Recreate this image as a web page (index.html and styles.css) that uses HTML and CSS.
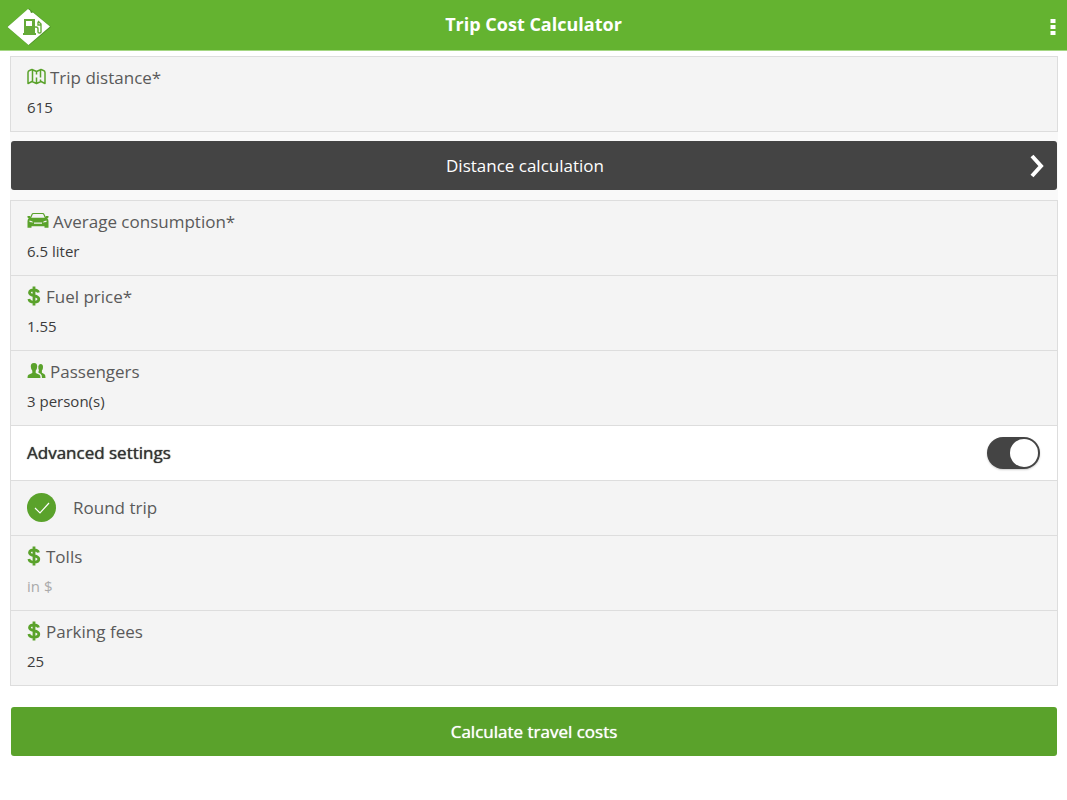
FILE: index.html
```html
<!DOCTYPE html>
<html lang="en">
<head>
<meta charset="utf-8">
<meta name="viewport" content="width=device-width, initial-scale=1">
<title>Trip Cost Calculator</title>
<link rel="stylesheet" href="styles.css">
</head>
<body>
<svg class="symbols" aria-hidden="true">
  <symbol id="dollar" viewBox="0 0 14 20">
    <path d="M7 0.500v19M11.500 6.500C11 4.500 9.500 3.800 7 3.800C4.500 3.800 2.500 4.800 2.500 6.700C2.500 10.500 11.800 8.600 11.800 13C11.800 15.200 9.500 16.200 7 16.200C4.300 16.200 2.300 15.200 1.900 13" fill="none" stroke="currentColor" stroke-width="2.800"/>
  </symbol>
</svg>
<header class="topbar">
  <svg class="logo" viewBox="0 0 46 40" role="img" aria-label="Fuel pump logo">
    <path d="M23 1.500L45 20L23 38.500L1 20Z" fill="#4f9428"/>
    <path d="M22 2L24 3.500L25 6L27 5.500L44 19.500L22.500 38L1.500 20Z" fill="#fff"/>
    <path d="M18 12h11v14h1v2H17v-2h1z" fill="#65aa38"/>
    <path d="M20 14h6v5h-6z" fill="#fff"/>
    <path d="M29 20h1q2 0 2 2v3q0 1 1.500 1t1.500-1v-8l-3-3M32 15v3h3" fill="none" stroke="#65aa38" stroke-width="1.400"/>
  </svg>
  <h1 class="title">Trip Cost Calculator</h1>
  <button class="menu" type="button" aria-label="Menu">
    <svg class="dots" viewBox="0 0 6 18"><path d="M.5 1h5v4h-5zM.5 7h5v4h-5zM.5 13h5v4h-5z" fill="#fff"/></svg>
  </button>
</header>
<main>
<form class="page">
  <div class="panel">
    <div class="group">
      <div class="row">
        <label class="label" for="distance">
          <svg class="icon map" viewBox="0 0 19 17"><path d="M1 4.500Q1 3 2.500 2.500L5 1.500L9.500 3.500L14 1.500L16.500 2.500Q18 3 18 4.500V15.500L14 13.500L9.500 15.500L5 13.500L1 15.500ZM5.500 1.500v12M9.500 3.500v3M9.500 9.500v6M13.500 1.500v8M13.500 11.500v2" fill="none" stroke="currentColor" stroke-width="1.500" stroke-linejoin="round"/></svg>
          Trip distance*</label>
        <input class="value" id="distance" type="text" value="615">
      </div>
    </div>
    <button class="button dark" type="button">
      <span class="caption">Distance calculation</span>
      <svg class="chevron" viewBox="0 0 14 24"><path d="M2 2L11 12L2 22" fill="none" stroke="#fff" stroke-width="4"/></svg>
    </button>
    <div class="group">
      <div class="row">
        <label class="label" for="consumption">
          <svg class="icon car" viewBox="0 0 22 17"><path d="M3.500 6L5 2.500Q5.300 1.500 6.500 1.500h9Q16.700 1.500 17 2.500L18.500 6" fill="none" stroke="currentColor" stroke-width="1.200"/><path fill-rule="evenodd" d="M0.500 4h2.500l1 1.800h14l1-1.800h2.500v1.500l-1.200.800q1.200 1.200 1.200 3v6.500H17.500v-1.500H4.500v1.500H.500v-6.500q0-1.800 1.200-3L.500 5.500ZM2.500 8.500v1.500l4 .500q-1-1.700-4-2ZM19.500 8.500v1.500l-4 .500q1-1.700 4-2ZM7 10.500h8v1.200h-8Z" fill="currentColor"/></svg>
          Average consumption*</label>
        <input class="value" id="consumption" type="text" value="6.5 liter">
      </div>
      <div class="row">
        <label class="label" for="price"><svg class="icon dollar"><use href="#dollar"/></svg>Fuel price*</label>
        <input class="value" id="price" type="text" value="1.55">
      </div>
      <div class="row">
        <label class="label" for="passengers">
          <svg class="icon people" viewBox="0 0 19 17"><path d="M7 1C9.500 1 10.300 2.500 10.200 4.700Q10 7.500 8.700 8.800V11L12.500 12.700Q13.500 13.300 13.500 16H0.500Q.500 13.300 1.500 12.700L5.300 11V8.800Q4 7.500 3.800 4.700C3.700 2.500 4.500 1 7 1ZM13.500 2C15.500 2 16.200 3.300 16 5.200Q16 7.400 14.900 8.600V10.800L17.500 12.300Q18.500 13 18.500 16H15Q15 12.500 13.500 11.800L11.500 10.700V9.500Q12.200 8.500 11.800 7.700Q11.200 6.800 11.300 4.500Q11.600 2 13.500 2Z" fill="currentColor"/></svg>
          Passengers</label>
        <input class="value" id="passengers" type="text" value="3 person(s)">
      </div>
      <div class="row line white">
        <label class="strong" for="advanced">Advanced settings</label>
        <input class="switch" id="advanced" type="checkbox" role="switch" checked>
      </div>
      <div class="row line">
        <label class="check-label" for="round">
          <span class="tick">
            <input class="round" id="round" type="checkbox" checked>
            <svg class="mark" viewBox="0 0 18 14"><path d="M2 7L7 12L16 2" fill="none" stroke="#fff" stroke-width="1.200"/></svg>
          </span>
          Round trip</label>
      </div>
      <div class="row">
        <label class="label" for="tolls"><svg class="icon dollar"><use href="#dollar"/></svg>Tolls</label>
        <input class="value" id="tolls" type="text" placeholder="in $">
      </div>
      <div class="row">
        <label class="label" for="parking"><svg class="icon dollar"><use href="#dollar"/></svg>Parking fees</label>
        <input class="value" id="parking" type="text" value="25">
      </div>
    </div>
  </div>
  <button class="button green" type="button">Calculate travel costs</button>
</form>
</main>
</body>
</html>
```

FILE: styles.css
```css
* {
  box-sizing: border-box;
}

body {
  margin: 0;
  background: #fff;
  color: #5a5a5a;
  font-family: "Open Sans", "Noto Sans", sans-serif;
  font-size: 17px;
}

.symbols {
  display: none;
}

.topbar {
  display: grid;
  grid-template-columns: 46px 1fr 46px;
  align-items: center;
  height: 51px;
  padding: 0 6px;
  background: #64b330;
  border-bottom: 1px solid #a5d784;
}

.logo {
  width: 46px;
  height: 40px;
  margin-top: 4px;
}

.title {
  margin: 0;
  padding-bottom: 3px;
  color: #fff;
  font-size: 18px;
  font-weight: 700;
  line-height: 24px;
  text-align: center;
}

.menu {
  display: flex;
  justify-content: flex-end;
  padding: 4px 5px 0 0;
  border: 0;
  background: none;
}

.dots {
  width: 6px;
  height: 18px;
}

.page {
  padding: 5px 9px 16px 10px;
}

.panel {
  background: #f9f9f9;
}

.group {
  border: 1px solid #ddd;
  background: #f4f4f4;
}

.row {
  padding: 8px 16px 14px;
}

.row + .row {
  border-top: 1px solid #ddd;
}

.row.line {
  display: flex;
  align-items: center;
  justify-content: space-between;
  height: 55px;
  padding: 0 17px 1px 16px;
}

.row.white {
  background: #fff;
}

.label {
  display: flex;
  align-items: center;
  gap: 4px;
  height: 26px;
  line-height: 26px;
}

.icon {
  flex: none;
  height: 17px;
  margin-bottom: 3px;
  color: #5aa22b;
}

.map,
.people {
  width: 19px;
}

.car {
  width: 22px;
}

.dollar {
  width: 14px;
  height: 20px;
  margin-right: 1px;
}

.value {
  display: block;
  width: 100%;
  height: 20px;
  margin: 6px 0 0;
  padding: 0;
  border: 0;
  background: none;
  color: #3c3c3c;
  font-family: inherit;
  font-size: 15px;
  line-height: 20px;
}

.value::placeholder {
  color: #aaa;
  opacity: 1;
}

.strong {
  color: #333;
  text-shadow: 0 0 1px #333;
}

.switch {
  appearance: none;
  display: flex;
  justify-content: flex-end;
  width: 53px;
  height: 32px;
  margin: 0;
  padding: 2px;
  border-radius: 16px;
  background: #444;
  box-shadow: 0 1px 2px #ccc;
}

.switch::before {
  content: "";
  width: 28px;
  height: 28px;
  border-radius: 50%;
  background: #fff;
}

.switch:not(:checked) {
  justify-content: flex-start;
}

.check-label {
  display: flex;
  align-items: center;
  gap: 17px;
}

.tick {
  display: grid;
  place-items: center;
}

.round,
.mark {
  grid-area: 1 / 1;
}

.round {
  appearance: none;
  width: 29px;
  height: 29px;
  margin: 0;
  border-radius: 50%;
  background: #5aa22b;
}

.mark {
  width: 18px;
  height: 14px;
}

.button {
  display: flex;
  align-items: center;
  justify-content: center;
  width: calc(100% - 2px);
  height: 49px;
  border: 0;
  border-radius: 3px;
  color: #fff;
  font-family: inherit;
  font-size: 17px;
}

.dark {
  margin: 9px 1px 10px;
  padding: 0 13px 0 0;
  background: #444;
}

.caption {
  flex: 1;
  padding-left: 9px;
}

.chevron {
  width: 14px;
  height: 24px;
}

.green {
  margin: 21px 1px 0;
  padding: 0;
  background: #5aa22b;
  text-shadow: 0 0 1px #fff;
}
```
